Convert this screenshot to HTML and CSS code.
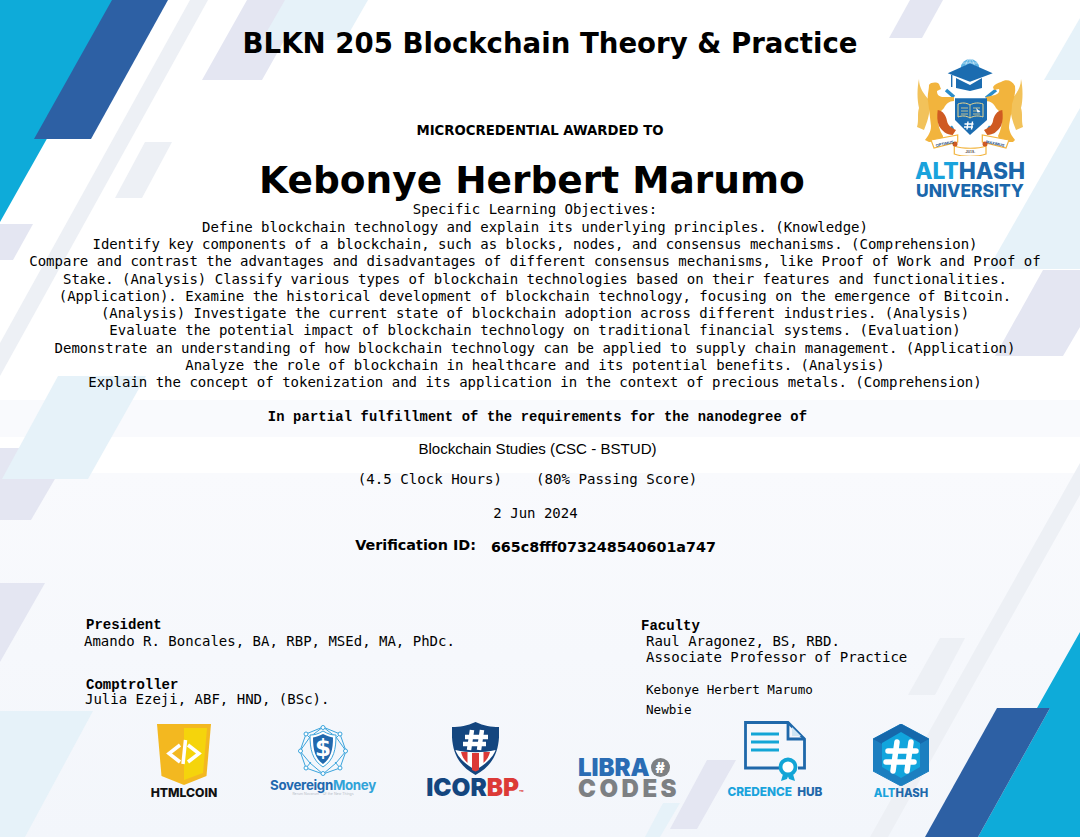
FILE: index.html
```html
<!DOCTYPE html>
<html lang="en">
<head>
<meta charset="utf-8">
<title>BLKN 205 Blockchain Theory &amp; Practice</title>
<link rel="stylesheet" href="styles.css">
</head>
<body>
<main class="cert">
  <svg class="backdrop" viewBox="0 0 1080 837" aria-hidden="true">
    <g fill="#e4e6f2">
      <polygon points="247,0 307,0 262,80 202,80"/>
      <polygon points="910,0 943,0 922,38 889,38"/>
      <polygon points="0,224 33,224 13,260 0,260"/>
      <polygon points="1043,270 1080,270 1080,327 1063,356 995,356"/>
      <polygon points="0,448 73,448 31,520 0,520"/>
      <polygon points="0,583 45,583 0,662"/>
      <polygon points="707,760 736,760 697,829 670,829"/>
    </g>
    <g fill="#edf0f5">
      <polygon points="190,0 208,0 0,376 0,343"/>
      <polygon points="145,142 172,142 142,198 115,198"/>
      <polygon points="1080,463 1080,495 888,837 870,837"/>
      <polygon points="940,638 965,638 935,695 908,695"/>
    </g>
    <g fill="#e6f2f9">
      <polygon points="285,0 368,0 345,40 262,40"/>
      <polygon points="1044,80 1080,80 1080,18"/>
      <polygon points="988,269 1080,108 1080,269"/>
      <polygon points="58,376 146,376 88,479 2,479"/>
      <polygon points="0,711 93,711 25,837 0,837"/>
      <polygon points="663,803 680,803 660,837 645,837"/>
    </g>
    <polygon fill="#0eabd9" points="0,0 125,0 0,222"/>
    <polygon fill="#2d60a4" points="112,0 168,0 91,139 34,139"/>
    <polygon fill="#0eabd9" points="1080,632 1080,837 978,837 1050,708 1037,708"/>
    <polygon fill="#2d60a4" points="997,708 1050,708 978,837 925,837"/>
  </svg>

  <header class="head">
    <h1 class="course">BLKN 205 Blockchain Theory &amp; Practice</h1>
    <p class="awarded">MICROCREDENTIAL AWARDED TO</p>
    <h2 class="name">Kebonye Herbert Marumo</h2>
  </header>

  <aside class="brand">
    <svg class="crest" viewBox="0 0 108 98" width="108" height="98" role="img" aria-label="Althash University crest">
      <path d="M30 32 38 39M80 32 70 40M37 69l-7 5M72 69l7 5" stroke="#2a8cc9" stroke-width="3.500"/>
      <path d="M3 21C3 30 8 36 13 42 15 50 13 60 8 72L1 69C3 62 1 56 3 50 1 42 1 30 3 21Z" fill="#f2c25a"/>
      <path d="M13 27C15 24 21 24 23 26L25 31 21 33C21 36 22 38 26 39L38 39 38 43C33 43 30 46 28 50 25 53 22 56 22 60 22 66 23 72 27 78L27 83 13 84 9 82C12 78 15 74 15 68 14 60 13 50 12 43 11 38 13 32 13 27Z" fill="#f2b43d"/>
      <path d="M21.700 52C27 53 30 57 31 63 32 68 36 70 40 72L36.700 77C31 77 26 73 23 68 21 63 21 58 21.700 52Z" fill="#cf5a22"/>
      <path d="M105 21C105 30 100 36 95 42 93 50 95 60 100 72L107 69C105 62 107 56 105 50 107 42 107 30 105 21Z" fill="#f2c25a"/>
      <path d="M85 24C90 21 96 22 99 28 100 34 98 40 96 46 96 56 93 64 93 70 94 76 97 79 99 82L97 84 84 84 82 78C85 72 86 66 86 60 86 56 83 53 80 50 78 46 75 43 70 43L70 39 79 37C82 36 84 34 83 31L78 32 77 29C79 26 82 25 85 24Z" fill="#f2b43d"/>
      <path d="M86.300 52C81 53 78 57 77 63 76 68 72 70 68 72L71.300 77C77 77 82 73 85 68 87 63 87 58 86.300 52Z" fill="#cf5a22"/>
      <path d="M39 40.300H71V62L54 77 39 62Z" fill="#1b6cb0"/>
      <path d="M42 46c4-1.500 8-1.500 12 1 4-2.500 9-2.500 13-1v13c-4-1.500-9-1.500-13 1-4-2.500-8-2.500-12-1Z" fill="#1b6cb0" stroke="#e8d58e" stroke-width="1"/>
      <path d="M54 47v13M45 50h7M45 53h7M45 56h7M57 50h7M57 53h7M57 56h7" stroke="#e8d58e" stroke-width=".8"/>
      <path d="m60 50 4.500 4-3 .5Z" fill="#fff"/>
      <path d="M52 63.500l-1 8M56.500 63.500l-1 8M48.500 66h9M48 69h9" stroke="#fff" stroke-width="1.400"/>
      <circle cx="54" cy="10.300" r="9.300" fill="#5fb4e3"/>
      <g stroke="#e8f4fb" stroke-width=".6" fill="none"><ellipse cx="54" cy="10.300" rx="4.500" ry="9.300"/><path d="M45 10.300h18M46.500 5h15M46.500 15.500h15M54 1v18"/></g>
      <path d="M40 20 54 27 66 20V30L54 33 40 30Z" fill="#1b6cb0"/>
      <path d="M54 5.300 76.700 15.300 54 23.700 31.700 15.300Z" fill="#1b6cb0"/>
      <path d="M35.700 17v12" stroke="#1b6cb0" stroke-width="1.400"/>
      <path d="M15 82 41.700 77 41.700 84 18 90Z" fill="#fff" stroke="#f2b43d" stroke-width="1.200"/>
      <path d="M93 82 66.300 77 66.300 84 90 90Z" fill="#fff" stroke="#f2b43d" stroke-width="1.200"/>
      <path d="M38.300 88c8 3 24 3 31.700 0v8c-8 3-24 3-31.700 0Z" fill="#fff" stroke="#f2b43d" stroke-width="1.200"/>
      <circle cx="39" cy="86" r="2.500" fill="#cf5a22"/><circle cx="69" cy="86" r="2.500" fill="#cf5a22"/>
      <text class="motto" x="29" y="87" transform="rotate(-12 29 87)">OPTIMUS</text>
      <text class="motto" x="79" y="87" transform="rotate(12 79 87)">MAXIMUS</text>
      <text class="motto motto-year" x="54" y="95">-2019-</text>
    </svg>
    <p class="alt-word"><span class="alt-cyan">ALT</span>HASH</p>
    <p class="alt-uni">UNIVERSITY</p>
  </aside>

  <section class="objectives">
    <p>Specific Learning Objectives:</p>
    <p>Define blockchain technology and explain its underlying principles. (Knowledge)</p>
    <p>Identify key components of a blockchain, such as blocks, nodes, and consensus mechanisms. (Comprehension)</p>
    <p>Compare and contrast the advantages and disadvantages of different consensus mechanisms, like Proof of Work and Proof of</p>
    <p>Stake. (Analysis) Classify various types of blockchain technologies based on their features and functionalities.</p>
    <p>(Application). Examine the historical development of blockchain technology, focusing on the emergence of Bitcoin.</p>
    <p>(Analysis) Investigate the current state of blockchain adoption across different industries. (Analysis)</p>
    <p>Evaluate the potential impact of blockchain technology on traditional financial systems. (Evaluation)</p>
    <p>Demonstrate an understanding of how blockchain technology can be applied to supply chain management. (Application)</p>
    <p>Analyze the role of blockchain in healthcare and its potential benefits. (Analysis)</p>
    <p>Explain the concept of tokenization and its application in the context of precious metals. (Comprehension)</p>
  </section>

  <section class="details">
    <p class="fulfil">In partial fulfillment of the requirements for the nanodegree of</p>
    <p class="degree">Blockchain Studies (CSC - BSTUD)</p>
    <p class="hours">(4.5 Clock Hours)&nbsp;&nbsp;&nbsp; (80% Passing Score)</p>
    <p class="date">2 Jun 2024</p>
    <p class="verify"><span class="verify-label">Verification ID:</span><span class="verify-id">665c8fff073248540601a747</span></p>
  </section>

  <section class="signers">
    <div class="sign-col sign-left">
      <div class="signer">
        <h3 class="role">President</h3>
        <p class="person person-offset">Amando R. Boncales, BA, RBP, MSEd, MA, PhDc.</p>
      </div>
      <div class="signer">
        <h3 class="role">Comptroller</h3>
        <p class="person person-tight">Julia Ezeji, ABF, HND, (BSc).</p>
      </div>
    </div>
    <div class="sign-col sign-right">
      <h3 class="role">Faculty</h3>
      <p class="person person-in">Raul Aragonez, BS, RBD.</p>
      <p class="person person-in">Associate Professor of Practice</p>
      <p class="learner learner-first">Kebonye Herbert Marumo</p>
      <p class="learner">Newbie</p>
    </div>
  </section>

  <footer class="logos">
    <figure class="logo logo-html">
      <svg viewBox="0 0 54 62" width="54" height="62" aria-hidden="true">
        <path d="M0 0h54l-4.500 52L27 61 4.500 52Z" fill="#f3b820"/>
        <path d="M27 4h23l-4 45-19 7Z" fill="#f5d40c"/>
        <path d="M23 21 12 29.500 23 38M31 21l11 8.500L31 38M28.500 16l-2.500 24" fill="none" stroke="#fff" stroke-width="3.500"/>
      </svg>
      <figcaption class="cap-html">HTMLCOIN</figcaption>
    </figure>
    <figure class="logo logo-sov">
      <svg viewBox="0 0 50 51" width="50" height="51" aria-hidden="true">
        <g fill="none" stroke="#3ba4dc" stroke-width="1">
          <polygon points="25,2 42,9 48,26 42,43 25,49 8,43 2,26 8,9"/>
          <path d="M25 2 12 12 2 26 12 38 25 49 38 38 48 26 38 12ZM8 9l5 5M42 9l-5 5M8 43l5-6M42 43l-5-6"/>
        </g>
        <g fill="#fff" stroke="#3ba4dc" stroke-width="1">
          <circle cx="25" cy="2.500" r="2"/><circle cx="8" cy="9" r="2"/><circle cx="42" cy="9" r="2"/><circle cx="2.500" cy="26" r="2"/><circle cx="47.500" cy="26" r="2"/><circle cx="8" cy="43" r="2"/><circle cx="42" cy="43" r="2"/><circle cx="25" cy="48.500" r="2"/>
        </g>
        <path d="M25 6c5 3 8 4 13 4 0 14-2 25-13 32C14 35 12 24 12 10c5 0 8-1 13-4Z" fill="#fff" stroke="#3ba4dc" stroke-width="1"/>
        <path d="M25 9c4 2 7 3 10 3.500 0 12-2 21-10 26.500-8-5.500-10-14.500-10-26.500C18 12 21 11 25 9Z" fill="#2169ae"/>
        <text class="sov-sign" x="25" y="31">$</text>
      </svg>
      <figcaption class="cap-sov"><span class="sov-a">Sovereign</span><span class="sov-b">Money</span></figcaption>
      <figcaption class="cap-sov-sub">Rerum Novarum - Of the New Things</figcaption>
    </figure>
    <figure class="logo logo-icor">
      <svg viewBox="0 0 47 53" width="47" height="53" aria-hidden="true">
        <path d="M23.500 0C32 4 39 5 47 5c1 20-3 37-23.500 48C3 42-1 25 0 5 8 5 15 4 23.500 0Z" fill="#14467f"/>
        <path d="M23.500 48C10 41 4 31 3.500 28c12 3 28 3 40 0-.5 3-6.500 13-20 20Z" fill="#fff"/>
        <path d="M9 30h6.500v11C12 38 10 34 9 30ZM20 31h7v17l-3.500 1.500L20 48ZM31.500 30H38c-1 4-3 8-6.500 11Z" fill="#dc3a37"/>
        <path d="M20 8l-3 20M30 8l-3 20M13 15h23M11 22h23" stroke="#fff" stroke-width="4.500" fill="none"/>
      </svg>
      <figcaption class="cap-icor">ICOR<span class="icor-red">BP</span><span class="icor-tm">™</span></figcaption>
    </figure>
    <figure class="logo logo-libra">
      <p class="cap-libra">LIBRA<span class="libra-hash">#</span></p>
      <p class="cap-codes">CODES</p>
    </figure>
    <figure class="logo logo-cred">
      <svg viewBox="0 0 62 62" width="62" height="62" aria-hidden="true">
        <path d="M36 47H1.500V1.500H44L60.500 18V47H54" fill="none" stroke="#1f68aa" stroke-width="2.800"/>
        <path d="M44 1.500V18H60.500" fill="none" stroke="#1f68aa" stroke-width="2.800"/>
        <path d="M48 6 57 15H48Z" fill="#cfe6f4"/>
        <path d="M7 13h28M7 21h28M7 29h28" stroke="#12a5d6" stroke-width="3"/>
        <path d="M39 53l-2 7 6-2 2-5ZM49 53l2 7-6-2-2-5Z" fill="#12a5d6"/>
        <circle cx="44" cy="46" r="7.500" fill="#fff" stroke="#12a5d6" stroke-width="3.800"/>
      </svg>
      <figcaption class="cap-cred">CREDENCE&nbsp; <span class="cred-hub">HUB</span></figcaption>
    </figure>
    <figure class="logo logo-alth">
      <svg viewBox="0 0 56 62" width="56" height="62" aria-hidden="true">
        <polygon points="28,0 56,15 56,47 28,62 0,47 0,15" fill="#1c7fc0" stroke="#1c7fc0" stroke-width="1" stroke-linejoin="round"/>
        <polygon points="28,0 56,15 47,20 28,9 9,20 0,15" fill="#1668ab"/>
        <polygon points="28,8 47,19 47,43 28,54 9,43 9,19" fill="#11a5dd"/>
        <path d="M24 18l-4 29M38 18l-4 29M15 27h28M13 38h28" stroke="#fff" stroke-width="5.500" stroke-linecap="round" fill="none"/>
      </svg>
      <figcaption class="cap-alth"><span class="alt-cyan">ALT</span>HASH</figcaption>
    </figure>
  </footer>
</main>
</body>
</html>
```

FILE: styles.css
```css
* { box-sizing: border-box; margin: 0; padding: 0; }

html, body { height: 100%; }

body {
  background: #fff;
  color: #000;
  font-family: "DejaVu Sans Mono", monospace;
  overflow: hidden;
}

.cert {
  position: relative;
  width: 1080px;
  height: 837px;
  background: linear-gradient(
    #fff 0 400px,
    #f9fafd 400px 437px,
    #fff 437px 473px,
    #f9fafd 473px,
    #f3f6fb 837px
  );
  overflow: hidden;
  padding-top: 27px;
}

.backdrop {
  position: absolute;
  inset: 0;
  width: 1080px;
  height: 837px;
}

.head, .objectives, .details, .signers, .logos { position: relative; }

.head { text-align: center; font-family: "DejaVu Sans", sans-serif; font-weight: 700; }

.course {
  font-size: 27.600px;
  line-height: 34px;
  margin-left: 20px;
}

.awarded {
  font-size: 13.270px;
  line-height: 16px;
  margin-top: 62px;
}

.name {
  font-size: 37.500px;
  line-height: 48px;
  margin-top: 17px;
  margin-right: 16px;
}

.brand {
  position: absolute;
  left: 914px;
  top: 58px;
  width: 112px;
  display: flex;
  flex-direction: column;
  align-items: center;
  font-family: "Inter", sans-serif;
  font-weight: 800;
  color: #1b67ab;
}

.crest { display: block; }
.motto { font-family: "Liberation Sans", sans-serif; font-size: 4px; font-weight: 700; fill: #1b4f8a; text-anchor: middle; }
.motto-year { font-size: 3.500px; fill: #55504a; }

.alt-word { font-size: 22.800px; line-height: 18px; margin-top: 6px; }
.alt-uni { font-size: 17.400px; line-height: 14px; margin-top: 4px; }
.alt-cyan { color: #1aa3dc; }

.objectives {
  text-align: center;
  font-size: 14px;
  line-height: 17.300px;
  margin-top: -2.600px;
  margin-right: 10px;
  white-space: nowrap;
}

.details { text-align: center; }

.fulfil {
  font-family: "Liberation Mono", monospace;
  font-weight: 700;
  font-size: 13.820px;
  line-height: 16px;
  letter-spacing: .14px;
  margin-top: 17px;
  margin-right: 5px;
}

.degree {
  font-family: "Liberation Sans", sans-serif;
  font-size: 15.100px;
  line-height: 18px;
  margin-top: 15px;
  margin-right: 5px;
}

.hours {
  font-size: 14.100px;
  line-height: 18px;
  margin-top: 12px;
  margin-right: 25px;
}

.date {
  font-size: 14px;
  line-height: 18px;
  margin-top: 16px;
  margin-right: 9px;
}

.verify {
  font-family: "DejaVu Sans", sans-serif;
  font-weight: 700;
  display: flex;
  justify-content: center;
  gap: 15px;
  margin-top: 14px;
  margin-right: 9px;
  font-size: 14.370px;
  line-height: 18px;
}
.verify-id { position: relative; top: 2px; font-size: 14.300px; }

.signers {
  display: flex;
  margin-top: 64px;
  font-size: 14px;
  height: 110px;
}

.sign-col { display: flex; flex-direction: column; }

.sign-left { width: 640px; padding-left: 86px; gap: 28px; }
.sign-right { padding-left: 1px; padding-top: 1px; }

.role {
  font-family: "Liberation Mono", monospace;
  font-weight: 700;
  font-size: 14px;
  line-height: 14px;
}

.person { font-size: 14px; line-height: 17px; }
.person-offset { margin-left: -2px; line-height: 18px; }
.person-tight { line-height: 14px; margin-left: -1px; }
.person-in { margin-left: 5px; line-height: 16px; }

.learner {
  font-size: 12.600px;
  line-height: 20px;
  margin-left: 5px;
}
.learner-first { margin-top: 15px; }

.logos {
  display: flex;
  align-items: flex-end;
  height: 80px;
  padding-left: 130px;
  margin-top: -7px;
}

.logo {
  display: flex;
  flex-direction: column;
  align-items: center;
  font-family: "Inter", sans-serif;
  font-weight: 800;
  white-space: nowrap;
  flex: none;
}

.logo-html { width: 108px; margin-bottom: 1px; }
.cap-html { font-size: 12.200px; line-height: 14px; color: #111; }

.logo-sov { width: 126px; margin-left: 22px; margin-bottom: 4px; }
.sov-sign { font-family: "DejaVu Sans", sans-serif; font-weight: 700; font-size: 23px; fill: #fff; text-anchor: middle; }
.cap-sov { font-size: 13.300px; line-height: 14px; margin-top: 2px; letter-spacing: -.3px; font-weight: 700; }
.sov-a { color: #1f69af; }
.sov-b { color: #32a3d8; }
.cap-sov-sub { font-size: 3.500px; line-height: 5px; color: #b8bdc7; font-weight: 400; }

.logo-icor { width: 110px; margin-left: 34px; margin-bottom: -5.500px; }
.cap-icor { font-size: 24.400px; line-height: 24px; margin-top: .5px; color: #14467f; font-weight: 900; }
.icor-red { color: #dc3a37; }
.icor-tm { color: #dc3a37; font-size: 7px; }

.logo-libra { width: 104px; margin-left: 46px; align-items: flex-start; margin-bottom: 2px; padding-left: 2px; }
.cap-libra { font-size: 24px; line-height: 19px; color: #2a6cb4; display: flex; align-items: center; font-weight: 900; }
.libra-hash {
  width: 19px; height: 19px; margin-left: 1px; border-radius: 50%;
  background: #7d8083; color: #fff; font-size: 14px; line-height: 19px; text-align: center;
}
.cap-codes { font-size: 24px; line-height: 20px; margin-top: 2px; color: #7d8083; letter-spacing: 3.500px; font-weight: 900; }

.logo-cred { width: 106px; margin-left: 42px; margin-bottom: 2px; }
.cap-cred { font-size: 11.800px; line-height: 14px; color: #1aa3dc; margin-top: 2px; }
.cred-hub { color: #1f68aa; }

.logo-alth { width: 80px; margin-left: 33px; margin-bottom: 1px; }
.cap-alth { font-size: 11.300px; line-height: 14px; color: #1f68aa; }
```
